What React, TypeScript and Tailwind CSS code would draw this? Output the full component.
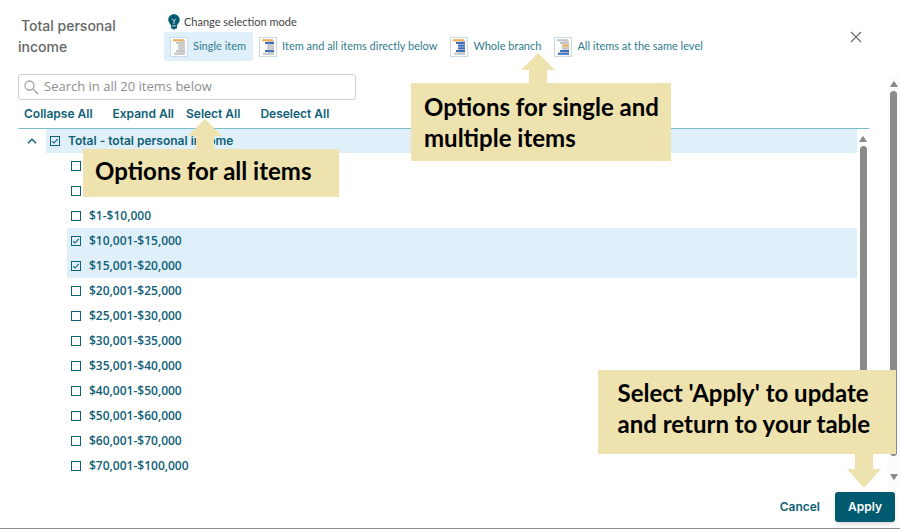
import { useState } from "react";
import clsx from "clsx";

type Item = {
  label: string;
  hideLabel?: boolean;
};

type Mode = {
  label: string;
  bars: string[];
};

const GOLD = "#eeb05c";
const BLUE = "#3f6fbd";
const GREY = "#c6c6c6";

const MODES: Mode[] = [
  { label: "Single item", bars: [GOLD, GREY, GREY, GREY, GREY, GREY] },
  { label: "Item and all items directly below", bars: [GOLD, BLUE, GREY, GREY, BLUE, GREY] },
  { label: "Whole branch", bars: [GOLD, BLUE, BLUE, BLUE, BLUE, GREY] },
  { label: "All items at the same level", bars: [GREY, GREY, GOLD, GREY, BLUE, BLUE] },
];

const ITEMS: Item[] = [
  { label: "Negative income", hideLabel: true },
  { label: "Nil income", hideLabel: true },
  { label: "$1-$10,000" },
  { label: "$10,001-$15,000" },
  { label: "$15,001-$20,000" },
  { label: "$20,001-$25,000" },
  { label: "$25,001-$30,000" },
  { label: "$30,001-$35,000" },
  { label: "$35,001-$40,000" },
  { label: "$40,001-$50,000" },
  { label: "$50,001-$60,000" },
  { label: "$60,001-$70,000" },
  { label: "$70,001-$100,000" },
];

// x, width of each bar in the small tree icon
const BAR_SHAPES = [
  [3, 11],
  [6, 9],
  [8, 7],
  [8, 7],
  [6, 9],
  [4, 11],
];

function ModeIcon({ bars }: { bars: string[] }) {
  return (
    <svg width="18" height="20" viewBox="0 0 18 20" className="shrink-0" aria-hidden="true">
      <rect x="0.5" y="0.5" width="17" height="19" fill="#fdfdfd" stroke="#c9dbe6" />
      {/* stem joining the bars */}
      <rect x="9" y="3" width="6" height="14" fill="#dcdcdc" />
      {bars.map((color, i) => (
        <rect
          key={i}
          x={BAR_SHAPES[i][0]}
          y={2.2 + i * 2.7}
          width={BAR_SHAPES[i][1]}
          height="2.1"
          fill={color}
        />
      ))}
    </svg>
  );
}

function BulbIcon() {
  return (
    <svg width="12" height="16" viewBox="0 0 12 16" className="shrink-0" aria-hidden="true">
      <path
        d="M6 0.3C2.8 0.3 0.3 2.7 0.3 5.8c0 2 1 3.3 2 4.5.5.6.8 1.2.8 2v1.4c0 .6.4 1 1 1h.6c.3.6.7.9 1.3.9s1-.3 1.3-.9h.6c.6 0 1-.4 1-1v-1.4c0-.8.3-1.4.8-2 1-1.2 2-2.5 2-4.5C11.7 2.7 9.2.3 6 .3Z"
        fill="#045c70"
      />
      <path d="M4 4.8 6 6.8 8 4.8M6 6.8v3" stroke="#d5e9ee" strokeWidth="1" fill="none" />
      <path d="M4.2 11.8h3.6" stroke="#d5e9ee" strokeWidth="0.9" />
    </svg>
  );
}

function CheckItem({
  label,
  hideLabel,
  checked,
  onChange,
}: Item & { checked: boolean; onChange: () => void }) {
  return (
    <label className="flex items-center gap-2">
      <span className="grid shrink-0 place-items-center">
        <input
          type="checkbox"
          checked={checked}
          onChange={onChange}
          aria-label={hideLabel ? label : undefined}
          className="col-start-1 row-start-1 size-[10px] appearance-none border border-[#0f6076]"
        />
        {checked && (
          <svg
            width="8"
            height="8"
            viewBox="0 0 8 8"
            className="pointer-events-none col-start-1 row-start-1"
            aria-hidden="true"
          >
            <path d="M1.2 4.2 3 6 6.8 1.9" stroke="#0f6076" strokeWidth="1.1" fill="none" />
          </svg>
        )}
      </span>
      {!hideLabel && <span>{label}</span>}
    </label>
  );
}

function ScrollArrow({ down }: { down?: boolean }) {
  return (
    <svg width="8" height="6" viewBox="0 0 8 6" className="shrink-0" aria-hidden="true">
      <path
        d={down ? "M0.7 0.5h6.6L4 5.5Z" : "M0.7 5.5h6.6L4 0.5Z"}
        fill="#8a8a8a"
        stroke="#8a8a8a"
        strokeLinejoin="round"
      />
    </svg>
  );
}

function CalloutArrow({ down, className }: { down?: boolean; className: string }) {
  const height = down ? 34 : 30;
  return (
    <svg
      width="34"
      height={height}
      viewBox={`0 0 34 ${height}`}
      className={className}
      aria-hidden="true"
    >
      <path
        d={down ? "M8 0H26V15H34L17 34L0 15H8Z" : "M17 0L34 17H26V30H8V17H0Z"}
        fill="#eee2ae"
      />
    </svg>
  );
}

export default function App() {
  const [mode, setMode] = useState("Single item");
  const [query, setQuery] = useState("");
  const [open, setOpen] = useState(true);
  const [total, setTotal] = useState(true);
  const [selected, setSelected] = useState(["$10,001-$15,000", "$15,001-$20,000"]);

  function toggle(label: string) {
    setSelected((prev) =>
      prev.includes(label) ? prev.filter((l) => l !== label) : [...prev, label]
    );
  }

  function selectAll() {
    setTotal(true);
    setSelected(ITEMS.map((item) => item.label));
  }

  function deselectAll() {
    setTotal(false);
    setSelected([]);
  }

  const visible = ITEMS.filter((item) => item.label.toLowerCase().includes(query.toLowerCase()));

  return (
    <div className="relative flex min-h-screen flex-col border-b border-[#8d8d8d] bg-white font-[Inter,sans-serif] text-[#0f6076]">
      {/* Header */}
      <header className="flex items-start pt-[14px] pr-9 pl-[18px]">
        <h1 className="w-[146px] shrink-0 pt-px pr-8 indent-[3px] text-sm leading-[21px] font-medium text-[#666]">
          Total personal income
        </h1>
        <div className="min-w-0 flex-1 font-[Lato,sans-serif] text-[11px]">
          <div className="mb-0.5 flex h-4 items-center gap-1 pl-1 text-[#444]">
            <BulbIcon />
            <span>Change selection mode</span>
          </div>
          <div className="flex" role="group" aria-label="Selection mode">
            {MODES.map((m) => (
              <button
                key={m.label}
                onClick={() => setMode(m.label)}
                aria-pressed={mode === m.label}
                className={clsx(
                  "flex h-[29px] items-center gap-[5px] rounded-[3px] pr-[7px] pl-1.5 whitespace-nowrap text-[#2f7c8d]",
                  mode === m.label && "bg-[#dff0fa]"
                )}
              >
                <ModeIcon bars={m.bars} />
                {m.label}
              </button>
            ))}
          </div>
        </div>
        <button aria-label="Close" className="mt-[15px] p-0.5">
          <svg width="12" height="12" viewBox="0 0 12 12" aria-hidden="true">
            <path d="M1 1 11 11M11 1 1 11" stroke="#747474" strokeWidth="1.4" />
          </svg>
        </button>
      </header>

      <div className="mt-[13px] flex flex-1">
        <main className="min-w-0 flex-1 pl-[18px]">
          {/* Search */}
          <div className="flex h-[26px] w-[338px] items-center gap-[5px] rounded-[3px] border border-[#cfcfcf] px-[5px]">
            <svg width="15" height="15" viewBox="0 0 15 15" className="shrink-0" aria-hidden="true">
              <circle cx="5.5" cy="5.5" r="4.5" fill="none" stroke="#a5a5a5" strokeWidth="1.3" />
              <path d="M9 9 14 14" stroke="#a5a5a5" strokeWidth="1.5" />
            </svg>
            <input
              type="text"
              value={query}
              onChange={(e) => setQuery(e.target.value)}
              aria-label="Search items"
              placeholder="Search in all 20 items below"
              className="min-w-0 flex-1 font-['Open_Sans',sans-serif] text-[13px] font-medium outline-none placeholder:text-[#8f8f8f]"
            />
          </div>

          <div className="flex h-7 items-center pl-1.5 text-xs font-semibold">
            <button onClick={() => setOpen(false)} className="mr-5">
              Collapse All
            </button>
            <button onClick={() => setOpen(true)} className="mr-3">
              Expand All
            </button>
            <button onClick={selectAll} className="mr-5">
              Select All
            </button>
            <button onClick={deselectAll}>Deselect All</button>
          </div>

          {/* Tree */}
          <div className="mr-[18px] flex border-t border-[#79bdc6] text-xs font-semibold">
            <ul className="min-w-0 flex-1">
              <li>
                <div className="flex h-6 items-center">
                  <button
                    onClick={() => setOpen(!open)}
                    aria-label="Toggle total personal income"
                    aria-expanded={open}
                    className="flex w-7 shrink-0 justify-center"
                  >
                    <svg
                      width="10"
                      height="6"
                      viewBox="0 0 10 6"
                      className={clsx(!open && "rotate-180")}
                      aria-hidden="true"
                    >
                      <path d="M1 5.2 5 1.2 9 5.2" stroke="#0f6076" strokeWidth="1.5" fill="none" />
                    </svg>
                  </button>
                  <div
                    className={clsx("flex h-full flex-1 items-center pl-1", total && "bg-[#dff0fa]")}
                  >
                    <CheckItem
                      label="Total - total personal income"
                      checked={total}
                      onChange={() => setTotal(!total)}
                    />
                  </div>
                </div>
                {open && (
                  <ul className="pl-[49px] font-['Open_Sans',sans-serif]">
                    {visible.map((item) => (
                      <li
                        key={item.label}
                        className={clsx(
                          "flex h-[25px] items-center pl-1",
                          selected.includes(item.label) && "bg-[#dff0fa]"
                        )}
                      >
                        <CheckItem
                          {...item}
                          checked={selected.includes(item.label)}
                          onChange={() => toggle(item.label)}
                        />
                      </li>
                    ))}
                  </ul>
                )}
              </li>
            </ul>
            <div className="flex w-3 flex-col items-center gap-1 pt-[7px]" aria-hidden="true">
              <ScrollArrow />
              <div className="w-[7px] flex-1 rounded-full bg-[#8a8a8a]" />
            </div>
          </div>
        </main>

        <div className="flex w-[13px] flex-col items-center gap-1 bg-[#fcfcfc] pt-[7px]" aria-hidden="true">
          <ScrollArrow />
          <div className="w-[7px] flex-1 rounded-full bg-[#8a8a8a]" />
          <div className="flex h-7 items-end pb-2">
            <ScrollArrow down />
          </div>
        </div>
      </div>

      <footer className="flex items-center justify-end gap-[15px] pt-1 pr-[5px] pb-1.5 text-xs font-semibold">
        <button>Cancel</button>
        <button className="h-[30px] w-[60px] rounded-[3px] bg-[#005a70] text-white shadow-md">
          Apply
        </button>
      </footer>

      {/* Help callouts */}
      <div className="absolute top-[83px] left-[411px] bg-[#eee2ae] py-2 pr-3 pl-[13px] font-[Lato,sans-serif] text-2xl leading-[31px] font-bold text-black">
        <CalloutArrow className="absolute bottom-full left-[110px]" />
        Options for single and
        <br />
        multiple items
      </div>
      <div className="absolute top-[149px] left-[83px] bg-[#eee2ae] pt-1.5 pr-7 pb-[11px] pl-3 font-[Lato,sans-serif] text-2xl leading-[31px] font-bold text-black">
        <CalloutArrow className="absolute bottom-full left-[105px]" />
        Options for all items
      </div>
      <div className="absolute right-1 bottom-[74px] bg-[#eee2ae] pt-[7px] pr-[26px] pb-[15px] pl-5 font-[Lato,sans-serif] text-2xl leading-[31px] font-bold text-black">
        <CalloutArrow down className="absolute top-full right-[15px]" />
        Select 'Apply' to update
        <br />
        and return to your table
      </div>
    </div>
  );
}
